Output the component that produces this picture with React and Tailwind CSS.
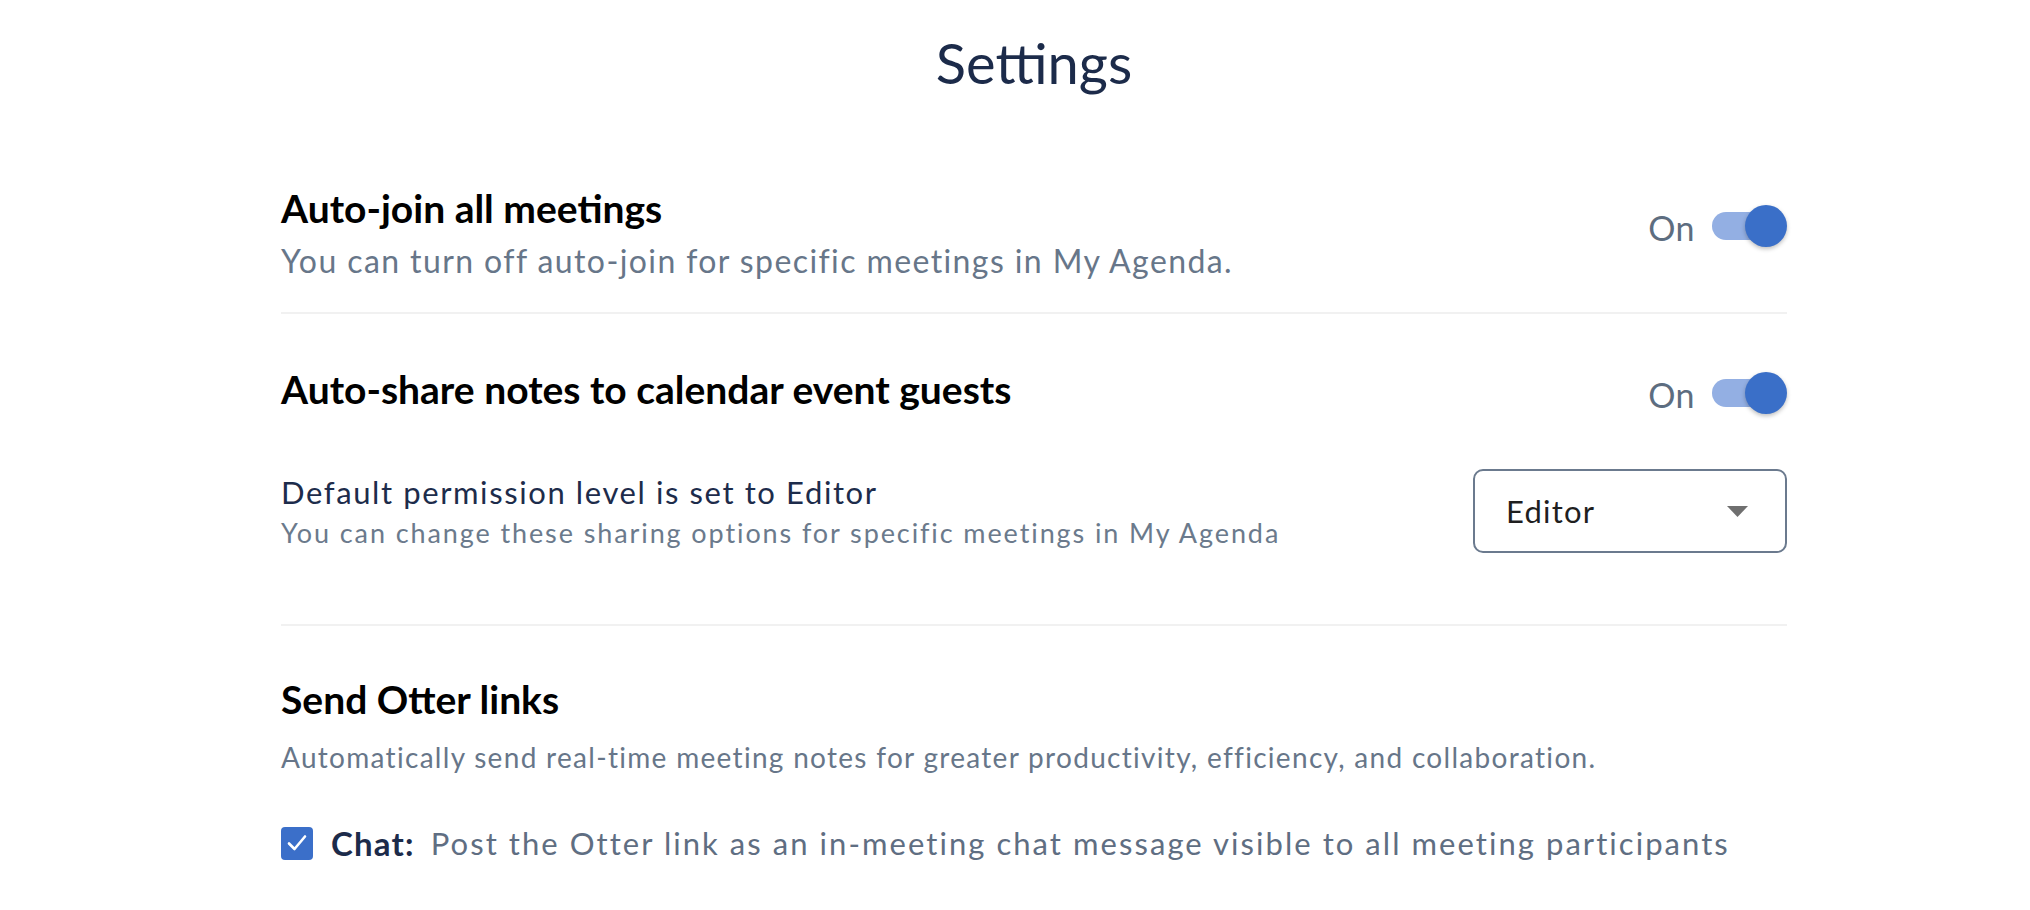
import { useState } from 'react';

const Toggle = ({ on }) => (
  <div className="relative w-[75px] h-[42px]">
    <div className={`absolute left-0 top-[7px] w-[64px] h-[28px] rounded-full ${on ? 'bg-[#93afe3]' : 'bg-gray-300'}`} />
    <div className="absolute right-0 top-0 w-[42px] h-[42px] rounded-full bg-[#3a6fc8] shadow-[0_2px_4px_rgba(0,0,0,0.25)]" />
  </div>
);

const ToggleLabel = ({ on }) => (
  <div className="flex items-center gap-[17px]">
    <span className="mt-[4px] text-[34px] leading-[40px] tracking-[0.5px] text-[#5d6d80]">{on ? 'On' : 'Off'}</span>
    <Toggle on={on} />
  </div>
);

export default function App() {
  const [chat, setChat] = useState(true);

  return (
    <div className="min-h-[910px] bg-white font-['Lato',sans-serif]">
      <div className="ml-[281px] w-[1506px] pt-[33px]">
        <h1 className="text-center text-[56px] leading-[60px] text-[#1c2b4a]">Settings</h1>

        {/* auto-join */}
        <div className="mt-[91px] flex justify-between">
          <div>
            <h2 className="text-[39px] leading-[48px] font-bold text-black">Auto-join all meetings</h2>
            <p className="mt-[9px] text-[32px] leading-[40px] tracking-[1.4px] text-[#677689]">
              You can turn off auto-join for specific meetings in My Agenda.
            </p>
          </div>
          <div className="mt-[20px] self-start">
            <ToggleLabel on />
          </div>
        </div>

        <div className="mt-[31px] h-[2px] bg-[#f1f1f1]" />

        {/* auto-share */}
        <div className="mt-[51px] flex justify-between">
          <h2 className="text-[39px] leading-[48px] font-bold text-black">Auto-share notes to calendar event guests</h2>
          <div className="mt-[6px] self-start">
            <ToggleLabel on />
          </div>
        </div>

        <div className="mt-[54px] flex items-center justify-between">
          <div>
            <p className="text-[31px] leading-[40px] tracking-[1.6px] text-[#1d2c4b]">Default permission level is set to Editor</p>
            <p className="mt-[3px] text-[27px] leading-[36px] tracking-[1.9px] text-[#6b7a8c]">
              You can change these sharing options for specific meetings in My Agenda
            </p>
          </div>
          <button className="w-[314px] h-[84px] rounded-[10px] border-2 border-[#6b7a8e] bg-white flex items-center justify-between pl-[31px] pr-[37px]">
            <span className="text-[31px] tracking-[1.2px] text-[#1f1f1f]">Editor</span>
            <svg width="21" height="11" viewBox="0 0 21 11">
              <path d="M0 0 H21 L10.5 11 Z" fill="#6f6f6f" />
            </svg>
          </button>
        </div>

        <div className="mt-[71px] h-[2px] bg-[#f1f1f1]" />

        {/* otter links */}
        <div className="mt-[49px]">
          <h2 className="text-[39px] leading-[48px] font-bold text-black">Send Otter links</h2>
          <p className="mt-[14px] text-[28px] leading-[40px] tracking-[1.3px] text-[#677689]">
            Automatically send real-time meeting notes for greater productivity, efficiency, and collaboration.
          </p>
          <label className="mt-[46px] flex items-center cursor-pointer">
            <span
              onClick={() => setChat(!chat)}
              className={`w-[32px] h-[33px] rounded-[4px] flex items-center justify-center ${chat ? 'bg-[#3b6fc9]' : 'border-2 border-gray-400'}`}
            >
              {chat && (
                <svg width="24" height="24" viewBox="0 0 24 24">
                  <path d="M4 12.5 L9.5 18 L20 5.5" fill="none" stroke="white" strokeWidth="2.6" strokeLinecap="round" strokeLinejoin="round" />
                </svg>
              )}
            </span>
            <span className="ml-[18px] text-[33px] leading-[40px] tracking-[1.2px] font-bold text-[#1c2b4a]">Chat:</span>
            <span className="ml-[16px] text-[31px] leading-[40px] tracking-[2.05px] text-[#5f6e82]">
              Post the Otter link as an in-meeting chat message visible to all meeting participants
            </span>
          </label>
        </div>
      </div>
    </div>
  );
}
